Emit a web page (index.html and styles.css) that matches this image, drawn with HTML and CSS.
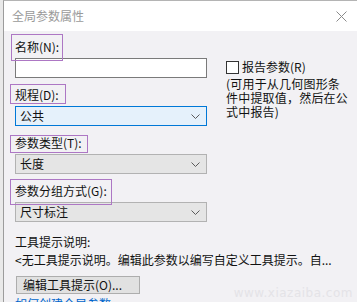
FILE: index.html
```html
<!DOCTYPE html>
<html lang="zh-CN">
<head>
<meta charset="utf-8">
<title>全局参数属性</title>
<link rel="stylesheet" href="styles.css">
</head>
<body>
<div class="window">
  <div class="titlebar">
    <span class="title">全局参数属性</span>
    <svg class="close" width="11" height="11" viewBox="0 0 11 11"><path d="M0.5 0.5 L10.5 10.5 M10.5 0.5 L0.5 10.5" stroke="#8a8a8a" stroke-width="1" fill="none"/></svg>
  </div>
  <div class="content">
    <div class="main">
      <div class="left">
        <div class="field">
          <span class="label hl hl-name">名称(N):</span>
          <div class="textbox"></div>
        </div>
        <div class="field">
          <span class="label hl hl-disc">规程(D):</span>
          <div class="select focused"><span>公共</span><svg class="chev" width="9" height="5" viewBox="0 0 9 5"><path d="M0.5 0.5 L4.5 4.5 L8.5 0.5" stroke="#5a5a5a" fill="none"/></svg></div>
        </div>
        <div class="field">
          <span class="label hl hl-type">参数类型(T):</span>
          <div class="select"><span>长度</span><svg class="chev" width="9" height="5" viewBox="0 0 9 5"><path d="M0.5 0.5 L4.5 4.5 L8.5 0.5" stroke="#5a5a5a" fill="none"/></svg></div>
        </div>
        <div class="field">
          <span class="label hl hl-group">参数分组方式(G):</span>
          <div class="select"><span>尺寸标注</span><svg class="chev" width="9" height="5" viewBox="0 0 9 5"><path d="M0.5 0.5 L4.5 4.5 L8.5 0.5" stroke="#5a5a5a" fill="none"/></svg></div>
        </div>
      </div>
      <div class="right">
        <div class="check"><span class="box"></span><span>报告参数(R)</span></div>
        <p class="note">(可用于从几何图形条件中提取值，然后在公式中报告)</p>
      </div>
    </div>
    <div class="tips">
      <div class="line">工具提示说明:</div>
      <div class="line">&lt;无工具提示说明。编辑此参数以编写自定义工具提示。自...</div>
      <div class="btn">编辑工具提示(O)...</div>
      <div class="link">如何创建全局参数</div>
    </div>
  </div>
  <div class="watermark">www.xiazaiba.com</div>
</div>
</body>
</html>
```
FILE: styles.css
```css
html, body {
  margin: 0;
  padding: 0;
}
body {
  width: 357px;
  height: 302px;
  overflow: hidden;
  background: #e9e9e9;
  font-family: "Noto Sans CJK SC", "Noto Sans", sans-serif;
  font-size: 12px;
  color: #111;
}
.window {
  position: relative;
  margin-left: 3px;
  height: 302px;
  border-left: 1px solid #9c9c9c;
  border-top: 1px solid #b4b4b4;
  display: flex;
  flex-direction: column;
  box-sizing: border-box;
}
.titlebar {
  height: 30px;
  flex: none;
  background: #fff;
  display: flex;
  align-items: center;
  justify-content: space-between;
  padding: 0 10px 0 8px;
}
.title {
  color: #9a9a9a;
  font-size: 12px;
  line-height: 16px;
}
.close {
  display: block;
}
.content {
  flex: 1;
  background: #f2f1f4;
  padding: 8px 0 0 11px;
}
.main {
  display: flex;
}
.left {
  width: 192px;
  display: flex;
  flex-direction: column;
}
.field {
  display: flex;
  flex-direction: column;
  align-items: flex-start;
  margin-bottom: 9px;
}
.field:last-child {
  margin-bottom: 0;
}
.label {
  height: 16px;
  line-height: 16px;
  margin-bottom: 3px;
  white-space: nowrap;
  position: relative;
}
.hl::before {
  content: "";
  position: absolute;
  border: 1px solid #ad77c4;
}
.hl-name::before { top: -5px; bottom: -6px; left: -4px; right: -4px; }
.hl-disc::before { top: -3px; bottom: -1px; left: -5px; right: -7px; }
.hl-type::before { top: 0; bottom: -2px; left: -5px; right: -6px; }
.hl-group::before { top: -4px; bottom: -6px; left: -5px; right: -5px; }
.textbox {
  width: 192px;
  height: 20px;
  box-sizing: border-box;
  background: #fff;
  border: 1px solid #7a7a7a;
}
.select {
  width: 192px;
  height: 20px;
  box-sizing: border-box;
  background: #e5e5e5;
  border: 1px solid #b2b2b2;
  display: flex;
  align-items: center;
  justify-content: space-between;
  padding: 0 6px 0 4px;
  line-height: 16px;
}
.select.focused {
  background: #e5f1fb;
  border-color: #0078d7;
}
.chev {
  display: block;
}
.right {
  width: 124px;
  margin-left: 19px;
  padding-top: 21px;
}
.check {
  display: flex;
  align-items: center;
  height: 14px;
  line-height: 14px;
}
.box {
  width: 13px;
  height: 13px;
  box-sizing: border-box;
  border: 1px solid #333;
  background: #fff;
  margin-right: 3px;
}
.note {
  margin: 3px 0 0 0;
  width: 124px;
  line-height: 14px;
  letter-spacing: 0.2px;
}
.tips {
  margin-top: 11px;
  display: flex;
  flex-direction: column;
  align-items: flex-start;
}
.line {
  line-height: 18px;
  white-space: nowrap;
}
.btn {
  margin-top: 7px;
  height: 18px;
  width: 124px;
  box-sizing: border-box;
  background: #e1e1e1;
  border: 1px solid #adadad;
  line-height: 16px;
  padding-left: 6px;
  margin-left: 1px;
}
.link {
  margin-top: 1px;
  line-height: 18px;
  color: #0066cc;
}
.watermark {
  position: absolute;
  right: 4px;
  bottom: 2px;
  font-family: "DejaVu Sans", sans-serif;
  font-size: 12px;
  letter-spacing: 0.5px;
  color: #e4e3e7;
  pointer-events: none;
}
```
